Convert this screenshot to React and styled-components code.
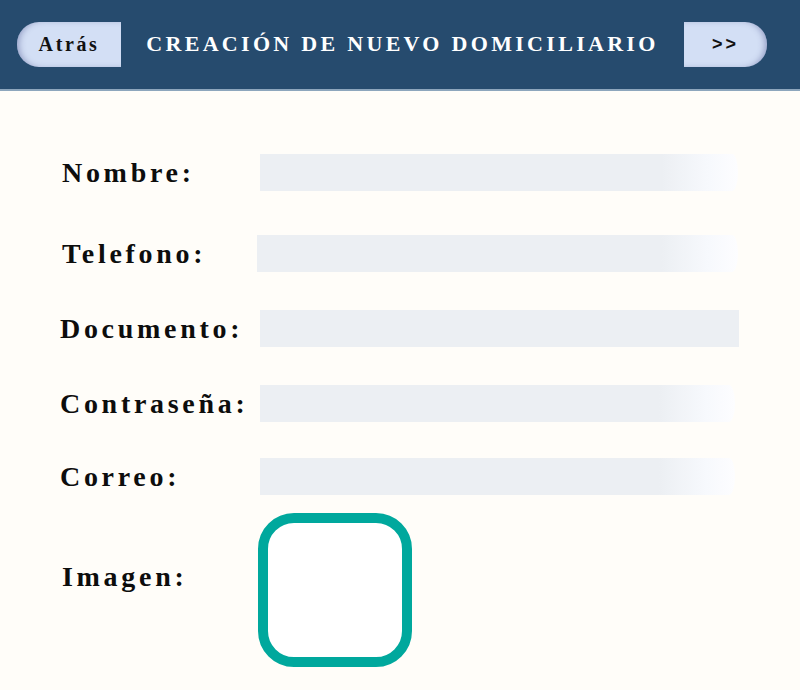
import React from 'react';
import styled, { createGlobalStyle } from 'styled-components';

const GlobalStyle = createGlobalStyle`
  html, body {
    margin: 0;
    padding: 0;
    background: #fffdf9;
  }
  body {
    font-family: 'Liberation Serif', 'DejaVu Serif', serif;
  }
`;

const Page = styled.div`
  width: 800px;
  min-height: 690px;
  background: #fffdf9;
`;

const Header = styled.header`
  height: 91px;
  background: #264b6e;
  border-bottom: 2px solid #8da6bd;
  box-sizing: border-box;
  display: flex;
  align-items: center;
  padding: 0 33px 1px 17px;
`;

const NavButton = styled.button`
  height: 45px;
  width: ${p => p.$w}px;
  border: none;
  background: #d3dff5;
  color: #111;
  font-family: ${p => (p.$sans ? "'Liberation Sans', sans-serif" : "'Liberation Serif', serif")};
  font-weight: 700;
  font-size: ${p => p.$size || 18}px;
  letter-spacing: ${p => p.$ls || 2}px;
  border-radius: ${p => (p.$side === 'left' ? '22px 0 0 22px' : '0 22px 22px 0')};
  box-shadow: ${p =>
    p.$side === 'left'
      ? 'inset 4px 0 6px -2px rgba(70, 80, 140, 0.45)'
      : 'inset -4px 0 6px -2px rgba(70, 80, 140, 0.45)'};
  padding: 0;
  cursor: pointer;
`;

const Title = styled.h1`
  flex: 1;
  margin: 0;
  text-align: center;
  color: #fff;
  font-family: 'Liberation Serif', serif;
  font-weight: 700;
  font-size: 22px;
  letter-spacing: 3.3px;
  white-space: nowrap;
`;

const Form = styled.form`
  display: flex;
  flex-direction: column;
  padding: 63px 0 0 0;
`;

const Row = styled.div`
  display: flex;
  align-items: center;
  margin-top: ${p => p.$mt || 0}px;
  padding-left: ${p => p.$pl || 62}px;
`;

const Label = styled.label`
  width: ${p => p.$w}px;
  padding-bottom: ${p => p.$pb || 0}px;
  font-family: 'Liberation Serif', serif;
  font-weight: 700;
  font-size: 28px;
  letter-spacing: 3.7px;
  color: #0d0d0d;
  white-space: nowrap;
`;

const Field = styled.input`
  width: ${p => p.$w}px;
  height: 37px;
  border: none;
  outline: none;
  padding: 0 10px;
  box-sizing: border-box;
  font-size: 18px;
  background: ${p =>
    p.$fade
      ? 'linear-gradient(90deg, #eceff3 0%, #eceff3 84%, #f7f9fd 94%, #fdfdff 100%)'
      : '#eceff3'};
  border-radius: ${p => (p.$fade ? '0 6px 6px 0 / 0 50% 50% 0' : '0')};
`;

const ImageBox = styled.div`
  width: 154px;
  height: 154px;
  box-sizing: border-box;
  border: 10px solid #00a89d;
  border-radius: 36px;
  background: #fff;
`;

const fields = [
  { label: 'Nombre:', mt: 0, pl: 62, lw: 198, fw: 478, fade: true },
  { label: 'Telefono:', mt: 44, pl: 62, lw: 195, fw: 481, fade: true },
  { label: 'Documento:', mt: 38, pl: 60, lw: 200, fw: 479, fade: false },
  { label: 'Contraseña:', mt: 38, pl: 60, lw: 200, fw: 475, fade: true },
  { label: 'Correo:', mt: 36, pl: 60, lw: 200, fw: 475, fade: true },
];

export default function App() {
  return (
    <Page>
      <GlobalStyle />
      <Header>
        <NavButton type="button" $side="left" $w={104} $size={20} $ls={2.6}>Atrás</NavButton>
        <Title>CREACIÓN DE NUEVO DOMICILIARIO</Title>
        <NavButton type="button" $side="right" $w={83} $size={18} $ls={3} $sans>&gt;&gt;</NavButton>
      </Header>
      <Form onSubmit={e => e.preventDefault()}>
        {fields.map(f => (
          <Row key={f.label} $mt={f.mt} $pl={f.pl}>
            <Label $w={f.lw}>{f.label}</Label>
            <Field type="text" $w={f.fw} $fade={f.fade} />
          </Row>
        ))}
        <Row $mt={18} $pl={62}>
          <Label $w={196} $pb={26}>Imagen:</Label>
          <ImageBox />
        </Row>
      </Form>
    </Page>
  );
}
